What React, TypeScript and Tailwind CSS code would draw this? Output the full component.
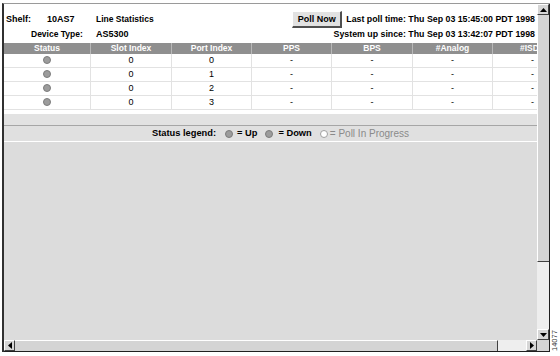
const columns = ["Status", "Slot Index", "Port Index", "PPS", "BPS", "#Analog", "#ISDN"]

const rows = [0, 1, 2, 3].map((port) => ({ slot: 0, port }))

function Dot({ hollow = false }: { hollow?: boolean }) {
  return (
    <span
      className={
        hollow
          ? "block w-[8px] h-[8px] rounded-full bg-white border border-[#a0a0a0]"
          : "block w-[8px] h-[8px] rounded-full bg-[#9c9c9c] border border-[#7c7c7c]"
      }
    />
  )
}

function Arrow({ dir }: { dir: "up" | "down" | "left" | "right" }) {
  const pts = {
    up: "0,4 3.5,0 7,4",
    down: "0,0 3.5,4 7,0",
    left: "4,0 0,3.5 4,7",
    right: "0,0 4,3.5 0,7",
  }[dir]
  const vertical = dir === "up" || dir === "down"
  return (
    <svg width={vertical ? 7 : 4} height={vertical ? 4 : 7} viewBox={vertical ? "0 0 7 4" : "0 0 4 7"}>
      <polygon points={pts} fill="#000" />
    </svg>
  )
}

function ScrollButton({ dir, className }: { dir: "up" | "down" | "left" | "right"; className: string }) {
  return (
    <div
      className={
        "flex items-center justify-center bg-[#d6d6d6] border-t border-l border-t-white border-l-white border-b border-r border-b-[#404040] border-r-[#404040] " +
        className
      }
    >
      <Arrow dir={dir} />
    </div>
  )
}

export default function App() {
  return (
    <div
      className="relative w-[560px] h-[356px] bg-white overflow-hidden text-black"
      style={{ fontFamily: '"Liberation Sans", Arial, sans-serif' }}
    >
      <div className="ml-[2px] mt-[3px] w-[548px] border-l-2 border-t border-l-[#303030] border-t-[#9a9a9a] flex flex-col">
        <div className="flex h-[336px]">
          {/* page content */}
          <div className="w-[533px] flex flex-col overflow-hidden bg-[#dcdcdc]">
            <div className="bg-white h-[110px] flex flex-col">
              <div className="h-[39px] flex flex-col text-[9px] font-bold leading-none">
                <div className="mt-[7px] h-[17px] flex items-center">
                  <span className="pl-[2px] w-[43px]">Shelf:</span>
                  <span className="w-[49px]">10AS7</span>
                  <span className="text-[8.5px]">Line Statistics</span>
                  <div className="ml-auto flex items-center pr-[2px]">
                    <div className="w-[50px] h-[17px] flex items-center justify-center bg-[#e2e2e2] border-t border-l border-t-white border-l-white border-b-2 border-r-2 border-b-[#505050] border-r-[#505050]">
                      Poll Now
                    </div>
                    <span className="ml-[4px] text-[8.8px]">Last poll time: Thu Sep 03 15:45:00 PDT 1998</span>
                  </div>
                </div>
                <div className="h-[13px] flex items-center">
                  <span className="pl-[27px] w-[92px] text-[8.5px]">Device Type:</span>
                  <span>AS5300</span>
                  <span className="ml-auto pr-[2px] text-[8.8px]">System up since: Thu Sep 03 13:42:07 PDT 1998</span>
                </div>
              </div>

              <div className="w-[569px]">
                <div className="grid grid-cols-[87px_81px_80px_80px_81px_80px_80px] h-[11px] bg-[#8f8f8f] text-white text-[8.5px] font-bold leading-none">
                  {columns.map((c) => (
                    <div key={c} className="flex items-center justify-center border-r border-[#b8b8b8] whitespace-nowrap">
                      {c}
                    </div>
                  ))}
                </div>
                {rows.map((r) => (
                  <div
                    key={r.port}
                    className="grid grid-cols-[87px_81px_80px_80px_81px_80px_80px] h-[14px] border-b border-[#e2e2e2] text-[9px] leading-none"
                  >
                    <div className="flex items-start justify-center pt-[2px] border-r border-[#e2e2e2]">
                      <Dot />
                    </div>
                    <div className="flex items-center justify-center border-r border-[#e2e2e2]">{r.slot}</div>
                    <div className="flex items-center justify-center border-r border-[#e2e2e2]">{r.port}</div>
                    {[0, 1, 2, 3].map((i) => (
                      <div key={i} className="flex items-center justify-center border-r border-[#e2e2e2]">
                        -
                      </div>
                    ))}
                  </div>
                ))}
              </div>
            </div>

            <div className="h-[12px] bg-[#e2e2e2] border-b border-[#a6a6a6]" />
            <div className="h-[16px] bg-[#e0e0e0] border-b border-white flex items-center pl-[148px] text-[9.3px] leading-none">
              <span className="font-bold">Status legend:</span>
              <span className="ml-[9px]">
                <Dot />
              </span>
              <span className="ml-[4px] font-bold">= Up</span>
              <span className="ml-[8px]">
                <Dot />
              </span>
              <span className="ml-[5px] font-bold">= Down</span>
              <span className="ml-[8px]">
                <Dot hollow />
              </span>
              <span className="ml-[2px] text-[#8a8a8a] text-[10px]">= Poll In Progress</span>
            </div>
            <div className="flex-1 bg-[#dcdcdc]" />
          </div>

          {/* vertical scrollbar */}
          <div className="w-[13px] flex flex-col border-r border-[#202020]">
            <ScrollButton dir="up" className="h-[11px]" />
            <div className="h-[247px] bg-[#d4d4d4] border-l border-white border-b border-b-[#404040]" />
            <div className="flex-1 bg-[#eeeeee]" />
            <ScrollButton dir="down" className="h-[11px]" />
          </div>
        </div>

        {/* horizontal scrollbar */}
        <div className="flex h-[12px] border-b border-[#202020]">
          <ScrollButton dir="left" className="w-[11px]" />
          <div className="w-[483px] bg-[#d4d4d4] border-t border-white border-r border-r-[#404040]" />
          <div className="flex-1 bg-[#eeeeee]" />
          <ScrollButton dir="right" className="w-[11px]" />
          <div className="w-[13px] bg-[#d6d6d6] border-r border-[#202020]" />
        </div>
      </div>

      <div className="absolute left-[551px] top-[351px] origin-top-left -rotate-90 text-[7.5px] leading-none text-[#333]">
        14077
      </div>
    </div>
  )
}
